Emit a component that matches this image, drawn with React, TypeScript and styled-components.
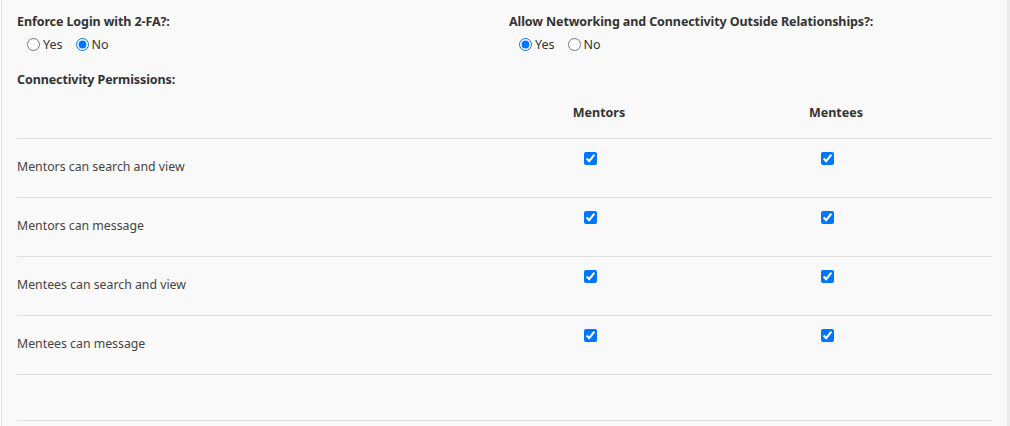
import React from "react";
import styled, { createGlobalStyle } from "styled-components";

const Global = createGlobalStyle`
  html, body { margin: 0; padding: 0; background: #ffffff; }
  body { font-family: "Noto Sans", "Open Sans", sans-serif; color: #333; }
`;

const Panel = styled.div`
  box-sizing: border-box;
  margin-left: 1px;
  width: 1009px;
  height: 426px;
  background: #f9f9f9;
  border-left: 1px solid #e4e4e4;
  border-right: 3px solid #ebebeb;
  padding: 13px 14px 0 15px;
  overflow: hidden;
`;

const TopRow = styled.div`
  display: grid;
  grid-template-columns: 492px 1fr;
`;

const Field = styled.div`
  display: flex;
  flex-direction: column;
`;

const Label = styled.div`
  font-size: 12.5px;
  font-weight: 700;
  color: #333;
  line-height: 18px;
  letter-spacing: -0.1px;
`;

const RadioRow = styled.div`
  display: flex;
  align-items: center;
  height: 20px;
  margin-top: 3px;
  padding-left: 5px;
`;

const RadioLabel = styled.label`
  display: inline-flex;
  align-items: center;
  font-size: 12.5px;
  color: #333;
  margin-right: 8px;
  input { margin: 0 3px 0 5px; width: 13px; height: 13px; }
`;

const SectionTitle = styled(Label)`
  margin-top: 17px;
`;

const Table = styled.div`
  display: grid;
  grid-template-columns: 501px 162px 312px;
`;

const HeadCell = styled.div<{ $center?: boolean }>`
  height: 50px;
  border-bottom: 1px solid #dedede;
  font-size: 12.5px;
  font-weight: 700;
  color: #333;
  text-align: ${(p) => (p.$center ? "center" : "left")};
  padding-top: 15px;
  box-sizing: border-box;
  line-height: 18px;
`;

const Cell = styled.div<{ $h?: number }>`
  height: ${(p) => p.$h ?? 59}px;
  border-bottom: 1px solid #dedede;
  box-sizing: border-box;
`;

const TextCell = styled(Cell)`
  font-size: 12.3px;
  color: #444;
  padding-top: 19px;
  line-height: 18px;
`;

const CheckCell = styled(Cell)`
  display: flex;
  justify-content: center;
  padding-top: 13px;
  padding-right: 18px;
  input { margin: 0; width: 13px; height: 13px; }
`;

const rows = [
  "Mentors can search and view",
  "Mentors can message",
  "Mentees can search and view",
  "Mentees can message",
];

export default function App() {
  return (
    <>
      <Global />
      <Panel>
        <TopRow>
          <Field>
            <Label>Enforce Login with 2-FA?:</Label>
            <RadioRow>
              <RadioLabel>
                <input type="radio" name="tfa" />Yes
              </RadioLabel>
              <RadioLabel>
                <input type="radio" name="tfa" defaultChecked />No
              </RadioLabel>
            </RadioRow>
          </Field>
          <Field>
            <Label>Allow Networking and Connectivity Outside Relationships?:</Label>
            <RadioRow>
              <RadioLabel>
                <input type="radio" name="net" defaultChecked />Yes
              </RadioLabel>
              <RadioLabel>
                <input type="radio" name="net" />No
              </RadioLabel>
            </RadioRow>
          </Field>
        </TopRow>
        <SectionTitle>Connectivity Permissions:</SectionTitle>
        <Table>
          <HeadCell />
          <HeadCell $center>Mentors</HeadCell>
          <HeadCell $center>Mentees</HeadCell>
          {rows.map((r) => (
            <React.Fragment key={r}>
              <TextCell>{r}</TextCell>
              <CheckCell>
                <input type="checkbox" defaultChecked />
              </CheckCell>
              <CheckCell>
                <input type="checkbox" defaultChecked />
              </CheckCell>
            </React.Fragment>
          ))}
          <Cell $h={46} />
          <Cell $h={46} />
          <Cell $h={46} />
        </Table>
      </Panel>
    </>
  );
}
